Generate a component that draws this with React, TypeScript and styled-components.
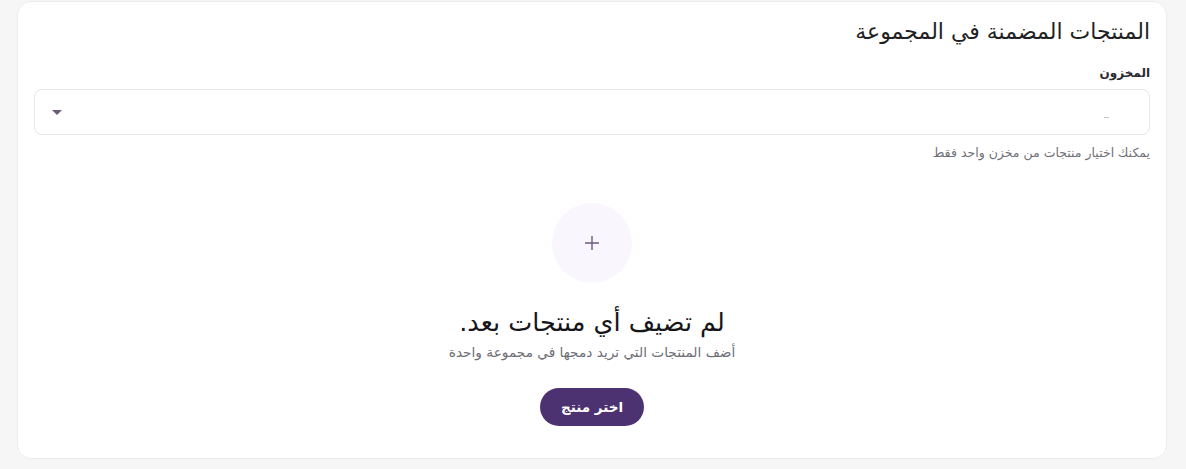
import styled, { createGlobalStyle } from "styled-components";

const GlobalStyle = createGlobalStyle`
  body {
    margin: 0;
    background: #f6f6f7;
    font-family: "DejaVu Sans", "Noto Sans", sans-serif;
  }
`;

const Page = styled.div`
  padding: 1px 19px 10px 17px;
`;

const Card = styled.section`
  direction: rtl;
  background: #ffffff;
  border: 1px solid #ececec;
  border-radius: 14px;
  padding: 16px 16px 32px;
  height: 458px;
  box-sizing: border-box;
`;

const Title = styled.h2`
  margin: 0;
  font-size: 22px;
  font-weight: 400;
  color: #1f1f24;
  line-height: 28px;
`;

const Field = styled.div`
  margin-top: 19px;
  display: flex;
  flex-direction: column;
`;

const Label = styled.label`
  font-size: 12px;
  font-weight: 600;
  color: #2a2a30;
  line-height: 16px;
  margin-bottom: 8px;
`;

const Select = styled.div`
  height: 46px;
  border: 1px solid #e6e6e8;
  border-radius: 8px;
  display: flex;
  align-items: center;
  justify-content: space-between;
  padding: 0 40px 0 17px;
  box-sizing: border-box;
`;

const Placeholder = styled.span`
  width: 5px;
  height: 1px;
  background: #c4c4c8;
  margin-top: 10px;
`;

const Caret = styled.span`
  width: 0;
  height: 0;
  border-left: 5px solid transparent;
  border-right: 5px solid transparent;
  border-top: 5px solid #6b5a7e;
`;

const Hint = styled.p`
  margin: 10px 0 0;
  font-size: 12.5px;
  color: #707078;
  line-height: 16px;
`;

const Empty = styled.div`
  margin-top: 42px;
  display: flex;
  flex-direction: column;
  align-items: center;
`;

const Circle = styled.div`
  width: 80px;
  height: 80px;
  border-radius: 50%;
  background: #f9f6fd;
  display: flex;
  align-items: center;
  justify-content: center;
  color: #6b5a7e;
`;

const EmptyTitle = styled.h3`
  margin: 23px 0 0;
  font-size: 25.5px;
  font-weight: 400;
  color: #16161a;
  line-height: 32px;
`;

const EmptyText = styled.p`
  margin: 5px 0 0;
  font-size: 13.7px;
  color: #6e6e76;
  line-height: 18px;
`;

const Button = styled.button`
  margin-top: 27px;
  width: 104px;
  height: 38px;
  border: none;
  border-radius: 19px;
  background: #4c3270;
  color: #ffffff;
  font-family: inherit;
  font-size: 13.5px;
  font-weight: 700;
  cursor: pointer;
`;

export default function App() {
  return (
    <>
      <GlobalStyle />
      <Page>
        <Card>
          <Title>المنتجات المضمنة في المجموعة</Title>
          <Field>
            <Label>المخزون</Label>
            <Select>
              <Placeholder />
              <Caret />
            </Select>
            <Hint>يمكنك اختيار منتجات من مخزن واحد فقط</Hint>
          </Field>
          <Empty>
            <Circle>
              <svg width="16" height="16" viewBox="0 0 16 16">
                <path d="M8 1v14M1 8h14" stroke="currentColor" strokeWidth="1.4" />
              </svg>
            </Circle>
            <EmptyTitle>لم تضيف أي منتجات بعد.</EmptyTitle>
            <EmptyText>أضف المنتجات التي تريد دمجها في مجموعة واحدة</EmptyText>
            <Button>اختر منتج</Button>
          </Empty>
        </Card>
      </Page>
    </>
  );
}
